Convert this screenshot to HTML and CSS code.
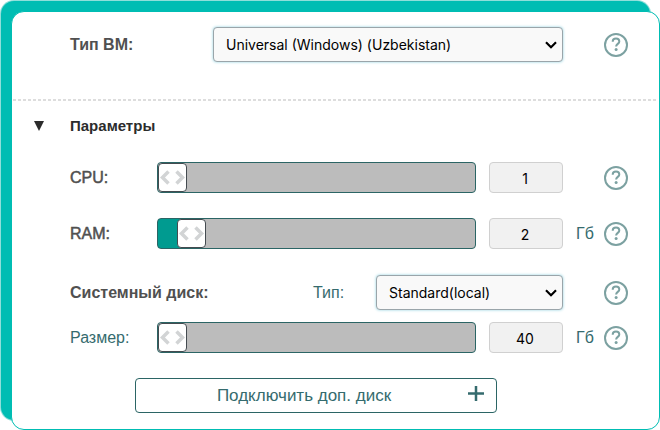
FILE: index.html
```
<!DOCTYPE html>
<html lang="ru">
<head>
<meta charset="utf-8">
<meta name="viewport" content="width=device-width, initial-scale=1">
<title>Конфигурация ВМ</title>
<link rel="stylesheet" href="styles.css">
</head>
<body>
<svg width="0" height="0" class="sprite" aria-hidden="true">
  <symbol id="help" viewBox="0 0 24 24">
    <circle cx="12" cy="12" r="11" fill="none" stroke="currentColor" stroke-width="2"/>
    <path d="M8.700 8.700C8.700 6.500 10.100 5.500 12 5.500s3.300 1.200 3.300 2.900c0 2.400-3.200 2.600-3.200 5.200" fill="none" stroke="currentColor" stroke-width="2"/>
    <circle cx="12.100" cy="16.500" r="1.500" fill="currentColor"/>
  </symbol>
</svg>
<form class="card">
  <section class="machine">
    <div class="row row-type">
      <label class="name" for="vm">Тип ВМ:</label>
      <select class="select" id="vm"><option>Universal (Windows) (Uzbekistan)</option></select>
      <span></span>
      <button class="help" type="button" aria-label="Справка"><svg><use href="#help"/></svg></button>
    </div>
  </section>
  <section class="params">
    <h2 class="heading"><button class="toggle" type="button" aria-label="Свернуть"><svg viewBox="0 0 10 10"><path d="M0 0h10L5 10z" fill="currentColor"/></svg></button>Параметры</h2>
    <div class="row">
      <label class="name medium" for="cpu">CPU:</label>
      <input class="slider" id="cpu" type="range" min="1" max="16" value="1">
      <input class="value" type="text" value="1" aria-label="CPU">
      <span></span>
      <button class="help" type="button" aria-label="Справка"><svg><use href="#help"/></svg></button>
    </div>
    <div class="row">
      <label class="name medium" for="ram">RAM:</label>
      <input class="slider" id="ram" type="range" min="1" max="16" value="2" style="--fill: 7%">
      <input class="value" type="text" value="2" aria-label="RAM">
      <span class="unit">Гб</span>
      <button class="help" type="button" aria-label="Справка"><svg><use href="#help"/></svg></button>
    </div>
    <div class="row row-disk">
      <span class="name">Системный диск:</span>
      <label class="plain" for="disk">Тип:</label>
      <select class="select" id="disk"><option>Standard(local)</option></select>
      <span></span>
      <button class="help" type="button" aria-label="Справка"><svg><use href="#help"/></svg></button>
    </div>
    <div class="row row-size">
      <label class="plain" for="size">Размер:</label>
      <input class="slider" id="size" type="range" min="40" max="500" value="40">
      <input class="value" type="text" value="40" aria-label="Размер">
      <span class="unit">Гб</span>
      <button class="help" type="button" aria-label="Справка"><svg><use href="#help"/></svg></button>
    </div>
    <button class="add" type="button"><span>Подключить доп. диск</span><svg viewBox="0 0 16 20"><path d="M8 0v15M0 7.500h16" stroke="currentColor" stroke-width="2.500"/></svg></button>
  </section>
</form>
</body>
</html>
```
FILE: styles.css
```
* { box-sizing: border-box; }
body {
  margin: 0;
  padding: 11px 0 0 11px;
  background: #fff;
  color: #505050;
  font: 16px/20px "Liberation Sans", Arial, sans-serif;
}
.sprite { position: absolute; }
.card {
  border: 1px solid #00bdb3;
  border-radius: 13px;
  background: #fff;
  box-shadow: -10px -10px 0 0 #00bdb3, -10px -10px 0 1px #8fdfda;
}
.machine {
  padding: 15px 31px 39px 58px;
  background: repeating-linear-gradient(90deg, #ddd 0 3px, #fff 3px 5px) 1px 100% / calc(100% - 3px) 2px no-repeat;
}
.params { padding: 15px 31px 16px 58px; }
.row {
  display: grid;
  grid-template-columns: 87px 1fr 87px 41px 24px;
  align-items: center;
  margin-bottom: 25px;
}
.row-type {
  grid-template-columns: 143px 1fr 41px 24px;
  margin-bottom: 0;
}
.row-disk {
  grid-template-columns: 1fr 63px 187px 41px 24px;
  margin: 26px 0 12px;
}
.name { font-weight: 700; }
.medium { font-weight: 400; -webkit-text-stroke: 0.5px currentColor; }
.plain, .unit { color: #356b6e; }
.unit { padding-left: 13px; }
.heading {
  display: flex;
  align-items: center;
  margin: 0 0 26px -36px;
  color: #2c2c2c;
  font-size: 15px;
  line-height: 20px;
}
.toggle {
  width: 36px;
  height: 10px;
  padding: 0;
  border: 0;
  background: none;
  color: inherit;
}
.toggle svg { display: block; width: 10px; height: 10px; }
.select {
  appearance: none;
  width: 100%;
  height: 35px;
  padding: 0 24px 0 12px;
  border: 1px solid #9aa5aa;
  border-radius: 4px;
  background: #f9f9f9 url("data:image/svg+xml,%3Csvg xmlns='http://www.w3.org/2000/svg' viewBox='0 0 12 8'%3E%3Cpath d='M1 1.200l5 5 5-5' fill='none' stroke='%23000' stroke-width='2.200'/%3E%3C/svg%3E") right 5px center / 12px 8px no-repeat;
  box-shadow: 0 0 3px #8fd0de;
  color: #000;
  font: 14px Inter, sans-serif;
}
.slider {
  appearance: none;
  width: 100%;
  height: 31px;
  margin: 0;
  border: 1px solid #2b6565;
  border-radius: 4px;
  background: linear-gradient(#009b90, #009b90) 0 0 / var(--fill, 0) 100% no-repeat #bcbcbc;
}
.slider::-webkit-slider-thumb {
  appearance: none;
  width: 29px;
  height: 29px;
  border: 1px solid #444b50;
  border-radius: 4px;
  background: #fff url("data:image/svg+xml,%3Csvg xmlns='http://www.w3.org/2000/svg' viewBox='0 0 27 27'%3E%3Cpath d='M9.500 7.500l-6 6 6 6M17.500 7.500l6 6-6 6' fill='none' stroke='%23d2d4d5' stroke-width='3.500'/%3E%3C/svg%3E") center / 27px 27px;
}
.value {
  width: 74px;
  height: 31px;
  margin-left: 13px;
  padding: 2px 2px 0 0;
  border: 1px solid #d0d0d0;
  border-radius: 4px;
  background: #f1f1f1;
  color: #000;
  font: 14px Inter, sans-serif;
  text-align: center;
}
.help {
  width: 24px;
  height: 24px;
  padding: 0;
  border: 0;
  background: none;
  color: #7ca1a1;
}
.help svg { display: block; width: 24px; height: 24px; }
.row-size { margin-bottom: 25px; }
.add {
  display: grid;
  grid-template-columns: 1fr 16px;
  align-items: center;
  width: calc(100% - 196px);
  height: 35px;
  margin-left: 65px;
  padding: 0 12px 0 4px;
  border: 1px solid #2b6565;
  border-radius: 4px;
  background: #fff;
  color: #356b6e;
  font-family: inherit;
  font-size: 17px;
}
.add svg { width: 16px; height: 20px; }
```
